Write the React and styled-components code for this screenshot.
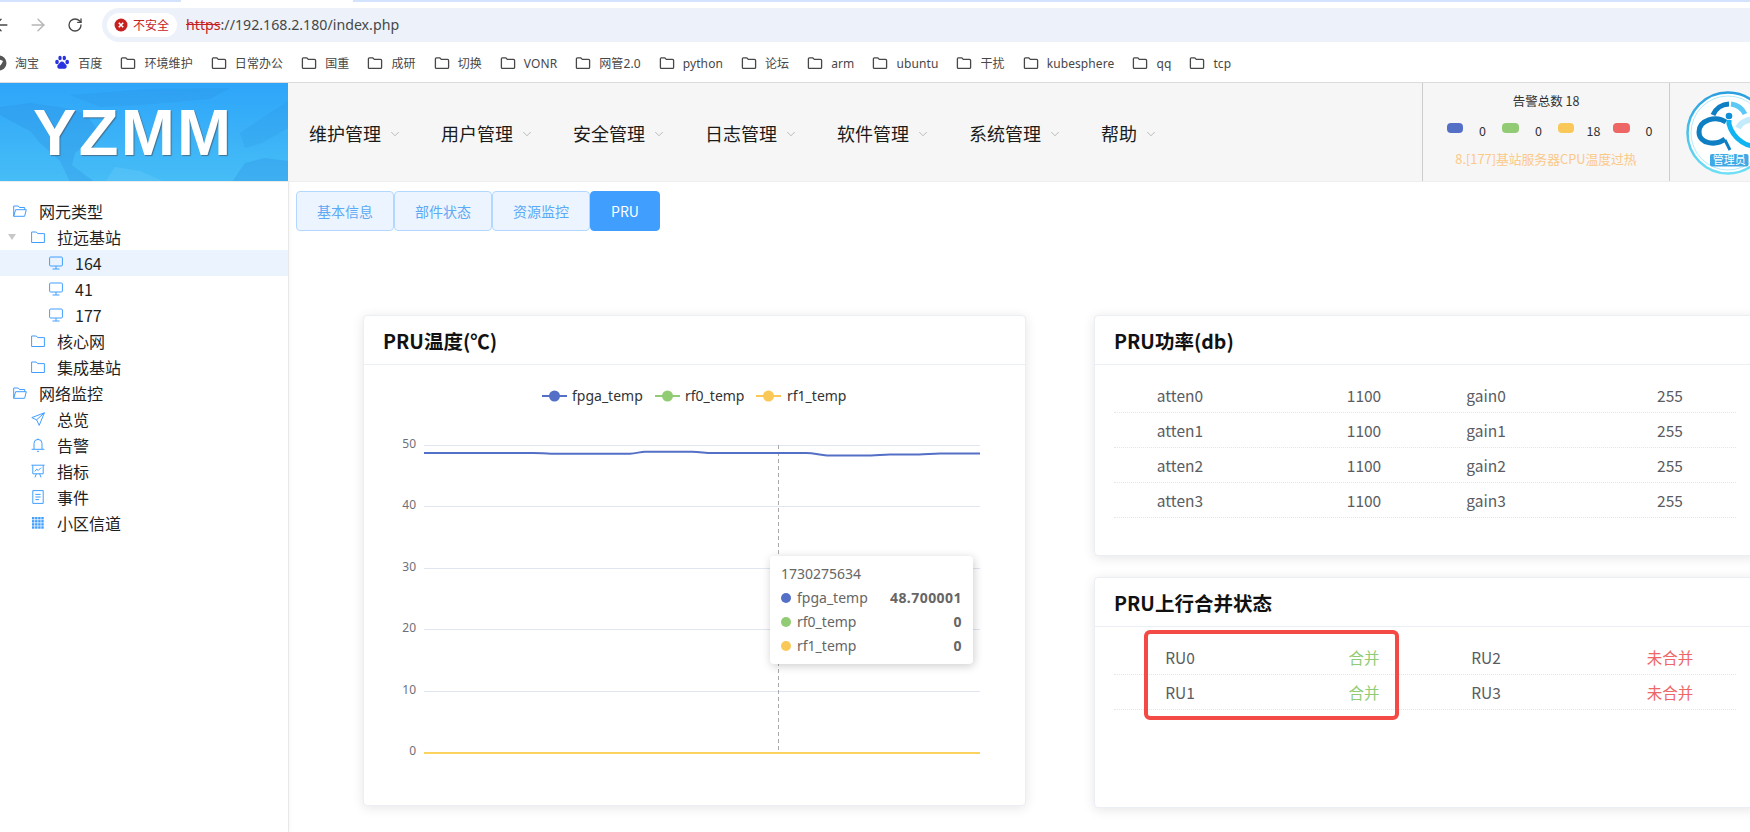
import React from 'react';
import styled, { createGlobalStyle } from 'styled-components';
import { ArrowLeft, ArrowRight, RotateCw, ChevronDown } from 'lucide-react';

const CJK = `"Noto Sans CJK SC", "Noto Sans", sans-serif`;
const CHROME = `"Noto Sans", "Noto Sans CJK SC", sans-serif`;

const GlobalStyle = createGlobalStyle`
  html, body { margin: 0; padding: 0; background: #fff; overflow: hidden; }
  * { box-sizing: border-box; }
`;

const Page = styled.div`
  width: 1750px;
  height: 832px;
  overflow: hidden;
  font-family: ${CJK};
  display: flex;
  flex-direction: column;
`;

/* browser chrome */
const TabStrip = styled.div`
  height: 2px;
  flex: none;
  display: flex;
  background: #d3e3fd;
`;
const ActiveTabGap = styled.div`
  width: 172px;
  margin-left: 181px;
  background: #fff;
`;
const Toolbar = styled.div`
  height: 40px;
  flex: none;
  display: flex;
  align-items: center;
  padding-top: 6px;
  margin-left: -18px;
`;
const NavIcon = styled.div`
  width: 37px;
  flex: none;
  display: flex;
  justify-content: center;
  color: ${p => (p.$off ? '#b5b5b5' : '#474747')};
`;
const AddressBar = styled.div`
  flex: 1;
  height: 34px;
  margin-left: 9px;
  border-radius: 17px 0 0 17px;
  background: #edf2fa;
  display: flex;
  align-items: center;
  padding-left: 5px;
`;
const SecurityChip = styled.div`
  height: 24px;
  width: 70px;
  border-radius: 12px;
  background: #fff;
  display: flex;
  align-items: center;
  gap: 5px;
  padding-left: 7px;
  font: 12px ${CHROME};
  color: #c5221f;
`;
const Url = styled.div`
  margin-left: 9px;
  padding-bottom: 1px;
  font: 14.2px ${CHROME};
  color: #474747;
  s { color: #c5221f; }
`;
const BookmarkBar = styled.div`
  height: 41px;
  flex: none;
  display: flex;
  align-items: center;
  padding-top: 2px;
  margin-left: -9px;
  border-bottom: 1px solid #dcdcdc;
`;
const Bookmark = styled.div`
  display: flex;
  align-items: center;
  gap: 8px;
  margin: 0 18px 0 ${p => p.$pull || 0}px;
  font: 12px ${CHROME};
  letter-spacing: .1px;
  color: #474747;
  white-space: nowrap;
`;

/* app header */
const Header = styled.div`
  height: 99px;
  flex: none;
  display: flex;
  background: #f6f6f6;
  border-bottom: 1px solid #eee;
`;
const Logo = styled.div`
  position: relative;
  width: 288px;
  flex: none;
  background: linear-gradient(180deg, #2ea5f9, #46bdf6);
  display: flex;
  align-items: center;
  padding-left: 33px;
  overflow: hidden;
`;
const LogoMap = styled.svg`
  position: absolute;
  left: 0;
  top: 0;
`;
const LogoText = styled.div`
  position: relative;
  font: bold 65px "Liberation Sans", Arial, sans-serif;
  letter-spacing: 2.3px;
  color: #fff;
  text-shadow: 1px 1px 1px rgba(70, 90, 110, .75);
  line-height: 1;
`;
const Menu = styled.div`
  flex: 1;
  display: flex;
  align-items: center;
  padding: 1px 0 0 21px;
`;
const MenuItem = styled.div`
  width: 132px;
  flex: none;
  display: flex;
  align-items: center;
  gap: 7px;
  font-size: 18px;
  color: #1a1a1a;
  svg { color: #8f8f8f; margin-top: 2px; }
`;
const AlarmPanel = styled.div`
  width: 248px;
  flex: none;
  border-left: 1px solid #ccc;
  border-right: 1px solid #ccc;
  display: flex;
  flex-direction: column;
  align-items: center;
  padding-top: 9px;
`;
const AlarmTitle = styled.div`
  font-size: 12.5px;
  line-height: 18px;
  color: #303133;
`;
const AlarmCounts = styled.div`
  display: grid;
  grid-template-columns: 16px 39px 17px 39px 16px 39px 17px 38px;
  align-items: center;
  justify-items: center;
  align-self: flex-start;
  margin: 9px 0 0 24px;
  font-size: 12.5px;
  line-height: 18px;
  color: #303133;
  span { padding-top: 3px; }
`;
const AlarmPill = styled.i`
  width: 100%;
  height: 10px;
  border-radius: 4px;
  margin-top: -3px;
  background: ${p => p.$color};
`;
const AlarmMessage = styled.div`
  margin-top: 10px;
  font-size: 12.8px;
  line-height: 18px;
  color: #fcc987;
  white-space: nowrap;
`;
const AvatarBox = styled.div`
  flex: none;
  width: 80px;
  overflow: hidden;
  display: flex;
  svg { display: block; }
`;

/* main */
const Main = styled.div`
  flex: 1;
  display: flex;
  min-height: 0;
`;
const Sidebar = styled.div`
  width: 289px;
  flex: none;
  padding-top: 16px;
  border-right: 1px solid #e8e8e8;
  box-shadow: 1px 0 3px rgba(0, 0, 0, .03);
`;
const TreeRow = styled.div`
  position: relative;
  height: 26px;
  display: flex;
  align-items: center;
  gap: 12px;
  padding-left: ${p => 13 + p.$depth * 18}px;
  font-size: 16px;
  color: #1f1f1f;
  background: ${p => (p.$active ? '#ebf3fe' : 'transparent')};
  svg { flex: none; }
`;
const Caret = styled.i`
  position: absolute;
  left: 8px;
  top: 10px;
  border: 4px solid transparent;
  border-top: 6px solid #c8c8c8;
  border-bottom: 0;
`;
const Content = styled.div`
  flex: 1;
  min-width: 0;
  padding: 9px 0 0 7px;
`;
const Tabs = styled.div`
  display: flex;
`;
const Tab = styled.div`
  width: ${p => p.$w}px;
  height: 40px;
  padding-bottom: 1px;
  border: 1px solid ${p => (p.$on ? '#409eff' : '#b3d8ff')};
  border-radius: 4px;
  background: ${p => (p.$on ? '#409eff' : '#ecf5ff')};
  color: ${p => (p.$on ? '#fff' : '#5ca9f5')};
  font-size: 14px;
  display: flex;
  align-items: center;
  justify-content: center;
`;
const Panels = styled.div`
  display: flex;
  gap: 68px;
  margin: 84px 0 0 67px;
`;
const RightColumn = styled.div`
  display: flex;
  flex-direction: column;
  gap: 21px;
  flex: none;
`;
const Card = styled.div`
  width: ${p => p.$w}px;
  height: ${p => p.$h}px;
  flex: none;
  border: 1px solid #ebeef5;
  border-radius: 4px;
  background: #fff;
  box-shadow: 0 2px 12px rgba(0, 0, 0, .1);
`;
const CardTitle = styled.div`
  height: 49px;
  padding: 0 19px;
  display: flex;
  align-items: center;
  font-size: 19.5px;
  font-weight: 700;
  color: #111;
  border-bottom: 1px solid #ebeef5;
`;
const ChartBody = styled.div`
  position: relative;
  svg { display: block; }
`;
const Tooltip = styled.div`
  position: absolute;
  left: 406px;
  top: 191px;
  width: 203px;
  height: 108px;
  padding: 6px 11px;
  background: #fff;
  border-radius: 4px;
  box-shadow: 1px 2px 10px rgba(0, 0, 0, .2);
  font: 14px/24px "Noto Sans", sans-serif;
  color: #666;
`;
const TipRow = styled.div`
  display: flex;
  align-items: center;
  b { margin-left: auto; font-weight: 700; letter-spacing: .45px; }
`;
const TipDot = styled.i`
  width: 10px;
  height: 10px;
  border-radius: 50%;
  margin-right: 6px;
  background: ${p => p.$color};
`;
const TableBody = styled.div`
  padding: 13px 19px;
`;
const Table = styled.div`
  position: relative;
  width: 622px;
`;
const Row = styled.div`
  height: 35px;
  display: flex;
  align-items: center;
  gap: 2px;
  padding: 0 6px;
  border-bottom: 1px dotted #d9e9f4;
  font-size: 15.5px;
  color: #5a5c61;
`;
const Half = styled.div`
  display: flex;
  gap: 64px;
`;
const Cell = styled.div`
  width: 120px;
  text-align: center;
  color: ${p => p.$color || 'inherit'};
`;
const Highlight = styled.div`
  position: absolute;
  left: 30px;
  top: -10px;
  width: 255px;
  height: 90px;
  border: 4px solid #f44a46;
  border-radius: 6px;
`;

const Ico = ({ children, size = 14, fill = 'none', stroke = '#409eff' }) => (
  <svg width={size} height={size} viewBox="0 0 14 14" fill={fill} stroke={stroke} strokeWidth="1">{children}</svg>
);
const FolderOpenIcon = () => <Ico><path d="M.7 12.3V2h4.6l1.2 1.5h5.2v2.2M.7 12.3h10.900l1.700-6.600H2.600z" /></Ico>;
const FolderIcon = () => <Ico><path d="M.6 2h4.700l1.300 1.600h6.800v8.900H.6z" /></Ico>;
const MonitorIcon = () => <Ico><rect x=".6" y="1" width="12.800" height="9" rx="1" /><path d="M7 10v3M3.500 13h7" /></Ico>;
const SendIcon = () => <Ico><path d="M13.400.8.8 5.600l4.800 2.200 2.600 5.600zM5.600 7.800 13.400.8" /></Ico>;
const BellIcon = () => <Ico><path d="M7 .6v1M3 11V5.400a4 4 0 0 1 8 0V11M.6 11.300h12.800M6 13.300h2" /></Ico>;
const ChartIcon = () => <Ico><path d="M.4 1.200h13.200M1.800 1.200v8.600h10.400V1.200M4 13.400l1.400-3.600M10 13.400 8.600 9.800M3.800 7.400l2-2.200 1.400 1.300 2.800-2.800" /></Ico>;
const DocIcon = () => <Ico><path d="M1.800.6h10.400v12.800H1.800zM4.400 4.400h5.200M4.400 7h5.200M4.400 9.600h3.600" /></Ico>;
const GridIcon = () => (
  <svg width="14" height="14" viewBox="0 0 14 14" fill="#409eff">
    {[1, 4.100, 7.200, 10.300].map(y => [1, 4.100, 7.200, 10.300].map(x => <rect key={`${x}-${y}`} x={x} y={y} width="2.400" height="2.400" />))}
  </svg>
);

const BookmarkFolder = () => (
  <svg width="16" height="16" viewBox="0 0 16 16" fill="none" stroke="#474747" strokeWidth="1.300">
    <path d="M1.400 3.800a1 1 0 0 1 1-1h3.400l1.500 1.600h6.300a1 1 0 0 1 1 1v7a1 1 0 0 1-1 1H2.400a1 1 0 0 1-1-1z" />
  </svg>
);
const TaobaoIcon = () => (
  <svg width="16" height="16" viewBox="0 0 16 16">
    <circle cx="8" cy="8" r="7.500" fill="#555" />
    <path d="M3 6c3-2 6-2 9 0-1 3-3 5-6 7 0-3-1-5-3-7z" fill="#fff" />
  </svg>
);
const BaiduIcon = () => (
  <svg width="16" height="16" viewBox="0 0 16 16" fill="#2932e1">
    <ellipse cx="3" cy="7" rx="1.800" ry="2.200" />
    <ellipse cx="6" cy="3" rx="1.700" ry="2.200" />
    <ellipse cx="10.300" cy="3" rx="1.700" ry="2.200" />
    <ellipse cx="13.200" cy="7" rx="1.800" ry="2.200" />
    <path d="M8 6.500c-2 0-2.500 2-4 3.300-1.500 1.600-.5 4.400 2 4 1-.2 3-.2 4 0 2.500.4 3.500-2.400 2-4C10.500 8.500 10 6.500 8 6.500z" />
  </svg>
);
const DangerIcon = () => (
  <svg width="14" height="14" viewBox="0 0 14 14">
    <circle cx="7" cy="7" r="6.500" fill="#c5221f" />
    <path d="M4.800 4.800l4.400 4.400M9.200 4.800l-4.400 4.400" stroke="#fff" strokeWidth="1.600" />
  </svg>
);

const bookmarks = ['环境维护', '日常办公', '国重', '成研', '切换', 'VONR', '网管2.0', 'python', '论坛', 'arm', 'ubuntu', '干扰', 'kubesphere', 'qq', 'tcp'];
const menus = ['维护管理', '用户管理', '安全管理', '日志管理', '软件管理', '系统管理', '帮助'];
const alarmCounts = [['#5470c6', 0], ['#91cc75', 0], ['#fac858', 18], ['#ee6666', 0]];

const tree = [
  { depth: 0, Icon: FolderOpenIcon, label: '网元类型' },
  { depth: 1, Icon: FolderIcon, label: '拉远基站', caret: true },
  { depth: 2, Icon: MonitorIcon, label: '164', active: true },
  { depth: 2, Icon: MonitorIcon, label: '41' },
  { depth: 2, Icon: MonitorIcon, label: '177' },
  { depth: 1, Icon: FolderIcon, label: '核心网' },
  { depth: 1, Icon: FolderIcon, label: '集成基站' },
  { depth: 0, Icon: FolderOpenIcon, label: '网络监控' },
  { depth: 1, Icon: SendIcon, label: '总览' },
  { depth: 1, Icon: BellIcon, label: '告警' },
  { depth: 1, Icon: ChartIcon, label: '指标' },
  { depth: 1, Icon: DocIcon, label: '事件' },
  { depth: 1, Icon: GridIcon, label: '小区信道' },
];

const tabs = [['基本信息', 98], ['部件状态', 98], ['资源监控', 98], ['PRU', 70, true]];

const gridLines = [[50, 446.500], [40, 507.500], [30, 569.500], [20, 630.500], [10, 692.500], [0, 754]];
const legend = [
  ['#5470c6', 542, 572, 'fpga_temp'],
  ['#91cc75', 655, 685, 'rf0_temp'],
  ['#fac858', 756, 787, 'rf1_temp'],
];
const fpgaLine = 'M424 454H533C540 454 545 454.700 551 454.700H630C636 454.700 640 452.700 645 452.700H692C700 452.700 705 454 712 454H806C815 454 820 456.400 827 456.400H871C878 456.400 882 455.400 890 455.400H919C926 455.400 932 454.400 940 454.400H980';

function TempChart() {
  return (
    <ChartBody>
      <svg width="661" height="440" viewBox="364 366 661 440">
        <g fontFamily={'"Noto Sans", sans-serif'}>
          {legend.map(([color, x, tx, label]) => (
            <g key={label}>
              <path d={`M${x} 397h25`} stroke={color} strokeWidth="2" />
              <circle cx={x + 12.500} cy="397" r="5.500" fill={color} />
              <text x={tx} y="402" fontSize="14" fill="#333">{label}</text>
            </g>
          ))}
          {gridLines.map(([v, y]) => (
            <g key={v}>
              <path d={`M424 ${y}H980`} stroke="#e0e6f1" />
              <text x="416" y={y + 2} textAnchor="end" fontSize="12" fill="#6e7079">{v}</text>
            </g>
          ))}
          <path d="M778.500 446V753" stroke="#aaa" strokeDasharray="4 3" />
          <path d={fpgaLine} fill="none" stroke="#5470c6" strokeWidth="2" />
          <path d="M424 754H980" stroke="#fbd35e" strokeWidth="2" />
        </g>
      </svg>
      <Tooltip>
        <div>1730275634</div>
        <TipRow><TipDot $color="#5470c6" />fpga_temp<b>48.700001</b></TipRow>
        <TipRow><TipDot $color="#91cc75" />rf0_temp<b>0</b></TipRow>
        <TipRow><TipDot $color="#fac858" />rf1_temp<b>0</b></TipRow>
      </Tooltip>
    </ChartBody>
  );
}

const Avatar = () => (
  <svg width="80" height="99" viewBox="1670 83 80 99">
    <defs>
      <linearGradient id="ring" x1="0" y1="0" x2="0" y2="1">
        <stop offset="0" stopColor="#2a9fe0" />
        <stop offset="1" stopColor="#6fe0f5" />
      </linearGradient>
    </defs>
    <circle cx="1728" cy="133" r="40.500" fill="#fff" stroke="url(#ring)" strokeWidth="2.500" />
    <circle cx="1728" cy="133" r="37" fill="none" stroke="#9fe6f7" strokeWidth=".8" />
    <path d="M1713 115A18 18 0 0 1 1729 104" fill="none" stroke="#0f7fc4" strokeWidth="5" />
    <path d="M1731 104A18 18 0 0 1 1745 114" fill="none" stroke="#5cc8f5" strokeWidth="5" />
    <circle cx="1729" cy="116" r="3.300" fill="#0f8fd8" />
    <path d="M1726 122C1716 115 1699 120 1699 132C1699 144 1716 146 1725 139" fill="none" stroke="#0f7fc4" strokeWidth="5" />
    <path d="M1725 140L1730 150" fill="none" stroke="#0f7fc4" strokeWidth="3" />
    <path d="M1729 120V124C1731 132 1736 138 1742 142C1745 144 1750 146 1754 146" fill="none" stroke="#10b4f2" strokeWidth="5" />
    <path d="M1738 128C1741 122 1748 119 1754 120" fill="none" stroke="#c3ebfb" strokeWidth="6" />
    <rect x="1710" y="154" width="38.500" height="12.500" rx="2" fill="#3fa9e6" />
    <text x="1729.200" y="164.300" textAnchor="middle" fontSize="11" fill="#fff">管理员</text>
  </svg>
);

export default function App() {
  return (
    <Page>
      <GlobalStyle />
      <TabStrip><ActiveTabGap /></TabStrip>
      <Toolbar>
        <NavIcon><ArrowLeft size={20} strokeWidth={1.700} /></NavIcon>
        <NavIcon $off><ArrowRight size={20} strokeWidth={1.700} /></NavIcon>
        <NavIcon><RotateCw size={16} strokeWidth={2} /></NavIcon>
        <AddressBar>
          <SecurityChip><DangerIcon />不安全</SecurityChip>
          <Url><s>https</s>://192.168.2.180/index.php</Url>
        </AddressBar>
      </Toolbar>
      <BookmarkBar>
        <Bookmark><TaobaoIcon />淘宝</Bookmark>
        <Bookmark $pull={-3}><BaiduIcon />百度</Bookmark>
        {bookmarks.map(b => <Bookmark key={b}><BookmarkFolder />{b}</Bookmark>)}
      </BookmarkBar>
      <Header>
        <Logo>
          <LogoMap width="288" height="99" viewBox="0 0 288 99" fill="#2a8fe0" fillOpacity=".3">
            <path d="M0 24 30 20l30 4 25 6 15 20-15 12-10 8-3 12 13 10 10 7H70L60 78 40 60 30 48 5 35 0 32Z" />
            <path d="M70 12 150 6l80-1-20 11-70 6-40 2Z" fillOpacity=".22" />
            <path d="M232 99l13-19 20-5 23 3v21Z" />
            <path d="M240 50l22-15 26-17v27l-26 15-17 5Z" fillOpacity=".2" />
            <path d="M105 99l10-15 25 4 25 11Z" fill="#6fcdf8" />
          </LogoMap>
          <LogoText>YZMM</LogoText>
        </Logo>
        <Menu>
          {menus.map(m => <MenuItem key={m}>{m}<ChevronDown size={14} strokeWidth={1} /></MenuItem>)}
        </Menu>
        <AlarmPanel>
          <AlarmTitle>告警总数 18</AlarmTitle>
          <AlarmCounts>
            {alarmCounts.map(([color, n], i) => (
              <React.Fragment key={i}>
                <AlarmPill $color={color} />
                <span>{n}</span>
              </React.Fragment>
            ))}
          </AlarmCounts>
          <AlarmMessage>8.[177]基站服务器CPU温度过热</AlarmMessage>
        </AlarmPanel>
        <AvatarBox><Avatar /></AvatarBox>
      </Header>
      <Main>
        <Sidebar>
          {tree.map(({ depth, Icon, label, caret, active }) => (
            <TreeRow key={label} $depth={depth} $active={active}>
              {caret && <Caret />}
              <Icon />
              {label}
            </TreeRow>
          ))}
        </Sidebar>
        <Content>
          <Tabs>
            {tabs.map(([t, w, on]) => <Tab key={t} $w={w} $on={on}>{t}</Tab>)}
          </Tabs>
          <Panels>
            <Card $w={663} $h={491}>
              <CardTitle>PRU温度(℃)</CardTitle>
              <TempChart />
            </Card>
            <RightColumn>
              <Card $w={663} $h={241}>
                <CardTitle>PRU功率(db)</CardTitle>
                <TableBody>
                  <Table>
                    {[0, 1, 2, 3].map(i => (
                      <Row key={i}>
                        <Half><Cell>atten{i}</Cell><Cell>1100</Cell></Half>
                        <Half><Cell>gain{i}</Cell><Cell>255</Cell></Half>
                      </Row>
                    ))}
                  </Table>
                </TableBody>
              </Card>
              <Card $w={663} $h={231}>
                <CardTitle>PRU上行合并状态</CardTitle>
                <TableBody>
                  <Table>
                    {[0, 1].map(i => (
                      <Row key={i}>
                        <Half><Cell>RU{i}</Cell><Cell $color="#91cc75">合并</Cell></Half>
                        <Half><Cell>RU{i + 2}</Cell><Cell $color="#ee6666">未合并</Cell></Half>
                      </Row>
                    ))}
                    <Highlight />
                  </Table>
                </TableBody>
              </Card>
            </RightColumn>
          </Panels>
        </Content>
      </Main>
    </Page>
  );
}
